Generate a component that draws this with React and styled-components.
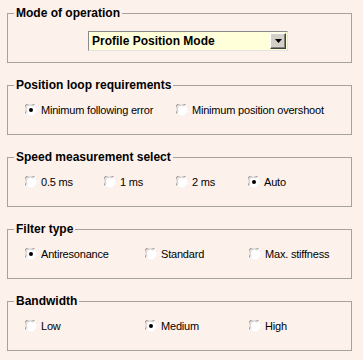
import React from 'react'
import styled, { createGlobalStyle } from 'styled-components'

const Global = createGlobalStyle`
  html, body {
    margin: 0;
    padding: 0;
    background: #fdf1eb;
  }
  body {
    font-family: "Liberation Sans", Arial, sans-serif;
    color: #000;
  }
`

const Page = styled.div`
  width: 363px;
  height: 360px;
  box-sizing: border-box;
  padding: 6px 0 0 7px;
  display: flex;
  flex-direction: column;
  gap: 15px;
  background: #fdf1eb;
`

const Group = styled.fieldset`
  width: 345px;
  box-sizing: border-box;
  margin: 0;
  padding: 0;
  min-width: 0;
  border: 1px solid #a6a39e;
`

const Legend = styled.legend`
  margin-left: 6px;
  padding: 0 2px;
  font-size: 12px;
  font-weight: bold;
  line-height: 14px;
  height: 14px;
`

const Body = styled.div`
  height: 42px;
  box-sizing: border-box;
  padding: ${p => p.$top || 11}px 0 0 ${p => p.$left || 17}px;
`

const Options = styled.div`
  display: grid;
  grid-template-columns: ${p => p.$cols};
  align-items: center;
  height: 14px;
`

const Option = styled.label`
  display: inline-flex;
  align-items: center;
  gap: 4px;
  font-size: 11px;
  letter-spacing: -0.2px;
  white-space: nowrap;
  line-height: 14px;
`

const Combo = styled.div`
  width: 200px;
  height: 20px;
  box-sizing: border-box;
  display: flex;
  align-items: center;
  justify-content: space-between;
  background: #ffffd9;
  border-top: 1px solid #8a8a8a;
  border-left: 1px solid #8a8a8a;
  border-right: 1px solid #e6e4e0;
  border-bottom: 1px solid #e6e4e0;
  padding: 0 1px 0 3px;
  font-size: 12px;
  font-weight: bold;
`

const ComboButton = styled.div`
  width: 16px;
  height: 16px;
  box-sizing: border-box;
  display: flex;
  align-items: center;
  justify-content: center;
  background: #d4d0c8;
  border-top: 1px solid #ffffff;
  border-left: 1px solid #ffffff;
  border-right: 1px solid #404040;
  border-bottom: 1px solid #404040;
  box-shadow: inset -1px -1px 0 #808080;
`

function Radio({ checked }) {
  return (
    <svg width="12" height="12" viewBox="0 0 12 12">
      <circle cx="6" cy="6" r="5.5" fill="#ffffff" />
      <path d="M1.1 9.3 A5.3 5.3 0 0 1 9.3 1.1" fill="none" stroke="#9c9a96" strokeWidth="1.1" />
      <path d="M2.3 8.3 A4.1 4.1 0 0 1 8.3 2.3" fill="none" stroke="#c4c2be" strokeWidth="1" />
      <path d="M10.9 2.7 A5.3 5.3 0 0 1 2.7 10.9" fill="none" stroke="#f2f0ec" strokeWidth="1" />
      {checked && <circle cx="6" cy="6" r="2" fill="#000" />}
    </svg>
  )
}

const groups = [
  {
    title: 'Position loop requirements',
    cols: '151px 1fr',
    options: ['Minimum following error', 'Minimum position overshoot'],
    checked: 0,
  },
  {
    title: 'Speed measurement select',
    cols: '79px 72px 72px 1fr',
    options: ['0.5 ms', '1 ms', '2 ms', 'Auto'],
    checked: 3,
  },
  {
    title: 'Filter type',
    cols: '120px 104px 1fr',
    options: ['Antiresonance', 'Standard', 'Max. stiffness'],
    checked: 0,
  },
  {
    title: 'Bandwidth',
    cols: '120px 104px 1fr',
    options: ['Low', 'Medium', 'High'],
    checked: 1,
  },
]

export default function App() {
  return (
    <Page>
      <Global />
      <Group>
        <Legend>Mode of operation</Legend>
        <Body $left={80}>
          <Combo>
            <span>Profile Position Mode</span>
            <ComboButton>
              <svg width="7" height="4" viewBox="0 0 7 4">
                <polygon points="0,0 7,0 3.5,4" fill="#000" />
              </svg>
            </ComboButton>
          </Combo>
        </Body>
      </Group>
      {groups.map(g => (
        <Group key={g.title}>
          <Legend>{g.title}</Legend>
          <Body>
            <Options $cols={g.cols}>
              {g.options.map((o, i) => (
                <Option key={o}>
                  <Radio checked={i === g.checked} />
                  <span>{o}</span>
                </Option>
              ))}
            </Options>
          </Body>
        </Group>
      ))}
    </Page>
  )
}
